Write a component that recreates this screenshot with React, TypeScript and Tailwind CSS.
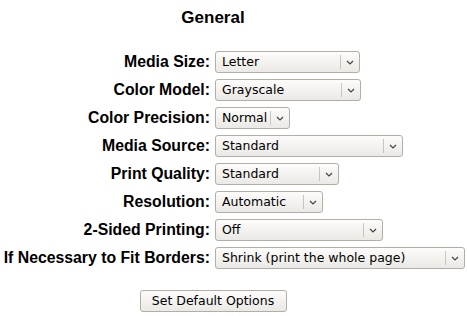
const rows = [
  { label: 'Media Size:', value: 'Letter', width: 145 },
  { label: 'Color Model:', value: 'Grayscale', width: 146 },
  { label: 'Color Precision:', value: 'Normal', width: 75 },
  { label: 'Media Source:', value: 'Standard', width: 188 },
  { label: 'Print Quality:', value: 'Standard', width: 124 },
  { label: 'Resolution:', value: 'Automatic', width: 108 },
  { label: '2-Sided Printing:', value: 'Off', width: 168 },
  { label: 'If Necessary to Fit Borders:', value: 'Shrink (print the whole page)', width: 250 },
];

function Chevron() {
  return (
    <svg width="8" height="5" viewBox="0 0 8 5" className="text-[#444]">
      <path d="M1 1 L4 4 L7 1" fill="none" stroke="currentColor" strokeWidth="1.2" />
    </svg>
  );
}

function Select({ value, width }: { value: string; width: number }) {
  return (
    <div
      className="flex h-[22px] items-stretch rounded-[3px] border border-[#b3ada3] bg-gradient-to-b from-[#fdfcfb] to-[#ebe9e5] font-['DejaVu_Sans',sans-serif] text-[12.5px] text-black"
      style={{ width }}
    >
      <span className="flex flex-1 items-center overflow-hidden whitespace-nowrap pl-[6px]">{value}</span>
      <span className="my-[3px] w-px bg-[#c9c4bc]" />
      <span className="flex w-[18px] items-center justify-center">
        <Chevron />
      </span>
    </div>
  );
}

export default function App() {
  return (
    <div className="h-[316px] w-[467px] bg-white font-['Liberation_Sans',Arial,sans-serif] text-black">
      <div className="w-[426px] pt-[8px] text-center">
        <h2 className="text-[17px] font-bold leading-[20px]">General</h2>
      </div>

      <div className="mt-[23px] ml-[3px] grid grid-cols-[207px_auto] gap-x-[5px] gap-y-[6px]">
        {rows.map((r) => (
          <div key={r.label} className="contents">
            <div className="flex h-[22px] items-center justify-end whitespace-nowrap text-[15.8px] font-bold">
              {r.label}
            </div>
            <Select value={r.value} width={r.width} />
          </div>
        ))}
      </div>

      <div className="mt-[21px] flex w-[426px] justify-center">
        <button className="h-[22px] w-[147px] rounded-[3px] border border-[#b3ada3] bg-gradient-to-b from-[#fdfcfb] to-[#ebe9e5] font-['DejaVu_Sans',sans-serif] text-[12.5px] text-black">
          Set Default Options
        </button>
      </div>
    </div>
  );
}
